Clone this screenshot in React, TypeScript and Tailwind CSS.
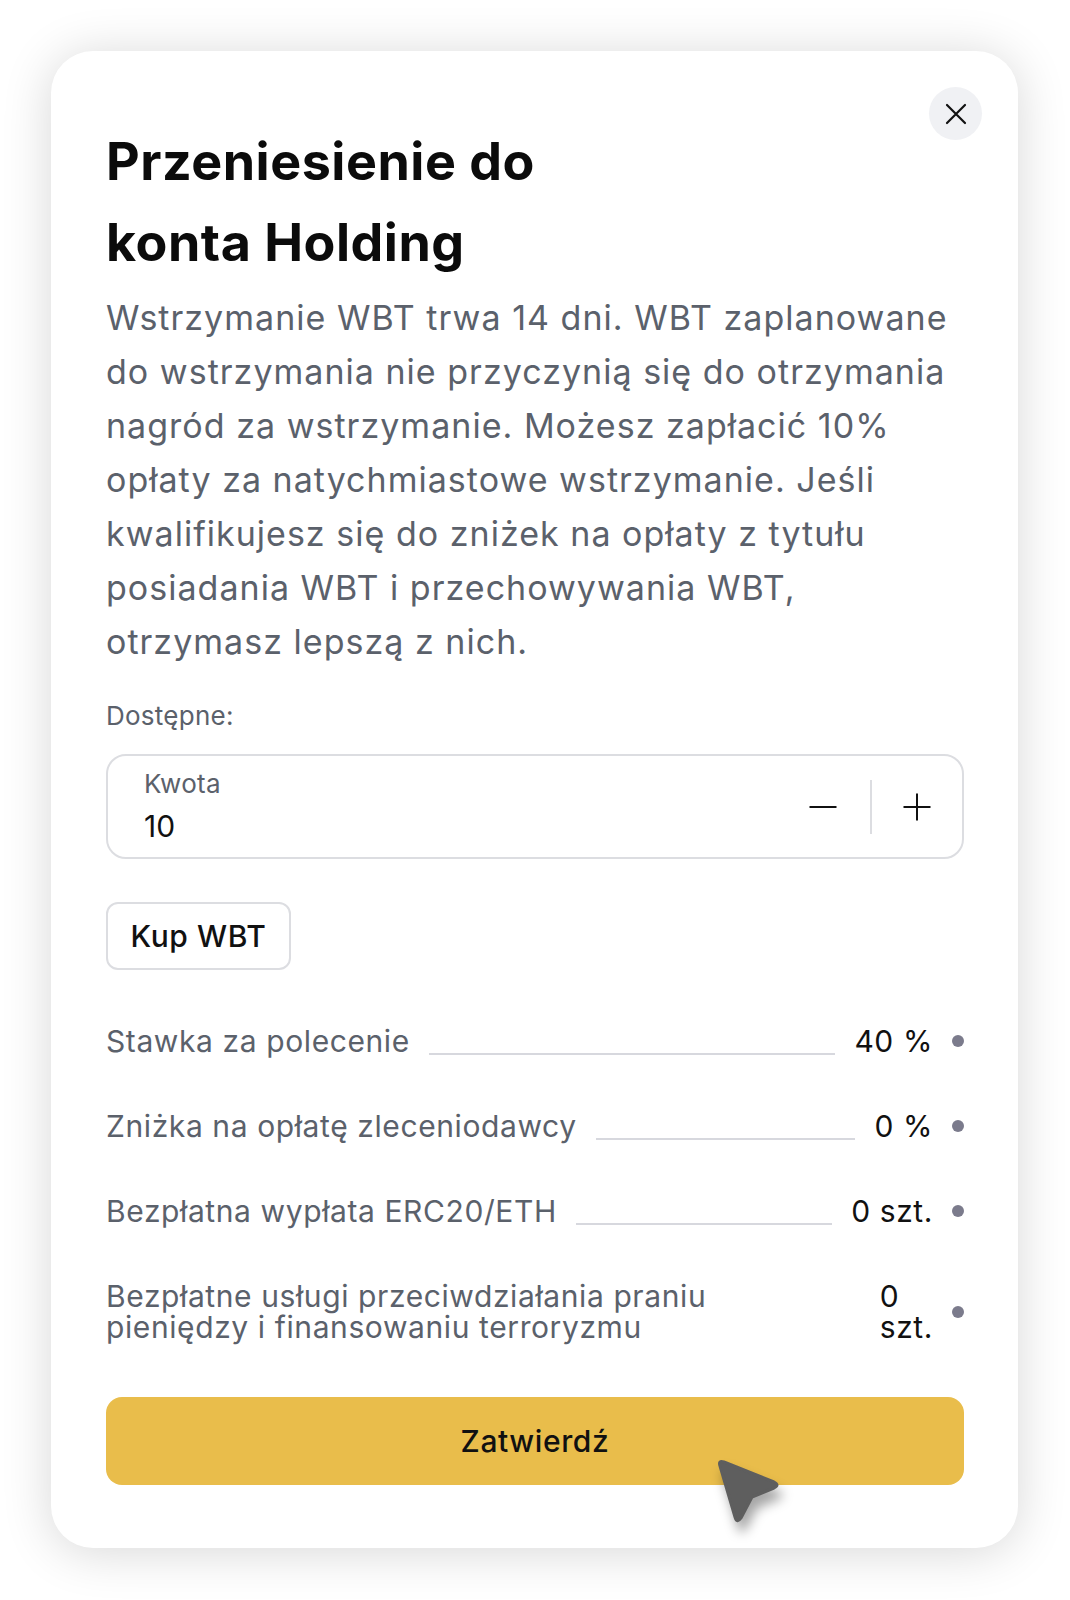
type Perk = { label: string; value: string; line: boolean };

const perks: Perk[] = [
  { label: "Stawka za polecenie", value: "40 %", line: true },
  { label: "Zniżka na opłatę zleceniodawcy", value: "0 %", line: true },
  { label: "Bezpłatna wypłata ERC20/ETH", value: "0 szt.", line: true },
  {
    label: "Bezpłatne usługi przeciwdziałania praniu pieniędzy i finansowaniu terroryzmu",
    value: "0 szt.",
    line: false,
  },
];

function Cursor() {
  return (
    <svg
      className="pointer-events-none absolute left-[708px] top-[1452px] drop-shadow-[4px_10px_6px_rgba(0,0,0,0.35)]"
      width="80"
      height="80"
      viewBox="0 0 80 80"
    >
      <path
        d="M12 14 Q10 8 16 10 L66 30 Q72 33 66 36 L44 45 L33 66 Q29 72 27 65 Z"
        fill="#5e5e5e"
        stroke="#5e5e5e"
        strokeWidth="3"
        strokeLinejoin="round"
      />
    </svg>
  );
}

export default function App() {
  return (
    <div
      className="relative min-h-[1600px] bg-white pt-[51px] pl-[51px]"
      style={{ fontFamily: "Inter, 'Noto Sans', sans-serif" }}
    >
      <div className="relative flex h-[1497px] w-[967px] flex-col rounded-[42px] bg-white pl-[55px] pr-[54px] pt-[70px] shadow-[0_4px_50px_rgba(0,0,0,0.16)]">
        <button className="absolute right-[36px] top-[36px] flex h-[53px] w-[53px] items-center justify-center rounded-full bg-[#f0f1f4]">
          <svg width="22" height="22" viewBox="0 0 22 22" stroke="#111" strokeWidth="2.2" strokeLinecap="round">
            <path d="M2 2 L20 20 M20 2 L2 20" />
          </svg>
        </button>

        <h2 className="text-[52px] font-bold leading-[81px] tracking-[0.01em] text-[#0b0b0b]">
          Przeniesienie do
          <br />
          konta Holding
        </h2>

        <p className="mt-[8px] text-[34px] leading-[54px] tracking-[0.03em] text-[#5b616b]">
          Wstrzymanie WBT trwa 14 dni. WBT zaplanowane do wstrzymania nie przyczynią się do
          otrzymania nagród za wstrzymanie. Możesz zapłacić 10% opłaty za natychmiastowe
          wstrzymanie. Jeśli kwalifikujesz się do zniżek na opłaty z tytułu posiadania WBT i
          przechowywania WBT, otrzymasz lepszą z nich.
        </p>

        <p className="mt-[29px] text-[26px] leading-[36px] tracking-[0.01em] text-[#5b616b]">
          Dostępne:
        </p>

        <div className="mt-[20px] flex h-[105px] items-center rounded-[20px] border-2 border-[#dcdde1] pl-[36px] pr-[31px]">
          <div className="flex flex-1 flex-col">
            <span className="text-[26px] leading-[32px] tracking-[0.01em] text-[#5b616b]">Kwota</span>
            <span className="mt-[6px] text-[30px] leading-[40px] text-[#111]">10</span>
          </div>
          <div className="flex items-center">
            <svg width="28" height="28" viewBox="0 0 28 28" stroke="#111" strokeWidth="2">
              <path d="M0.5 14 H27.5" />
            </svg>
            <div className="ml-[33px] mr-[31px] h-[54px] w-[2px] bg-[#dcdde1]" />
            <svg width="28" height="28" viewBox="0 0 28 28" stroke="#111" strokeWidth="2">
              <path d="M0.5 14 H27.5 M14 0.5 V27.5" />
            </svg>
          </div>
        </div>

        <button className="mt-[43px] h-[68px] w-[185px] rounded-[12px] border-2 border-[#dcdde1] text-[30px] font-medium tracking-[0.02em] text-[#111]">
          Kup WBT
        </button>

        <div className="mt-[51px] flex flex-col gap-[45px]">
          {perks.map((p) =>
            p.line ? (
              <div key={p.label} className="flex h-[40px] items-center">
                <span className="text-[30px] leading-[40px] tracking-[0.02em] text-[#5b616b]">{p.label}</span>
                <div className="mx-[19px] mt-[26px] h-[2px] flex-1 bg-[#d7d8de]" />
                <span className="text-[30px] leading-[40px] tracking-[0.02em] text-[#111]">{p.value}</span>
                <span className="ml-[19px] h-[12px] w-[12px] rounded-full bg-[#7b7b8c]" />
              </div>
            ) : (
              <div key={p.label} className="mt-[5px] flex items-center">
                <span className="max-w-[720px] flex-1 text-[30px] leading-[31px] tracking-[0.02em] text-[#5b616b]">
                  {p.label}
                </span>
                <span className="ml-auto w-min text-[30px] leading-[31px] tracking-[0.02em] text-[#111]">
                  {p.value}
                </span>
                <span className="ml-[19px] h-[12px] w-[12px] rounded-full bg-[#7b7b8c]" />
              </div>
            ),
          )}
        </div>

        <button className="mt-auto mb-[63px] h-[88px] w-full rounded-[16px] bg-[#e9bd4b] text-[30px] font-medium tracking-[0.02em] text-[#111]">
          Zatwierdź
        </button>
      </div>
      <Cursor />
    </div>
  );
}
